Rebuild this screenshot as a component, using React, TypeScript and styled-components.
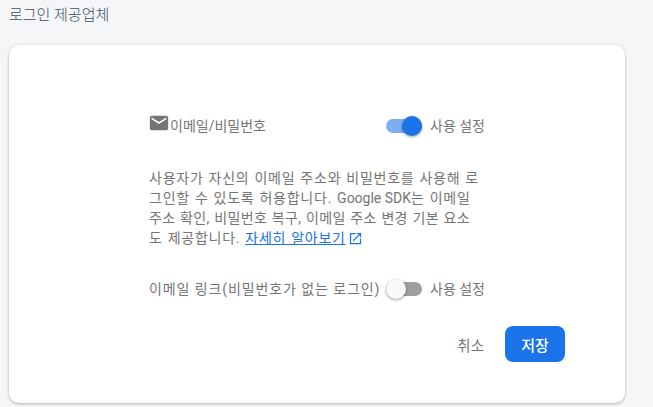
import styled, { createGlobalStyle } from "styled-components";

const GlobalStyle = createGlobalStyle`
  html, body {
    margin: 0;
    padding: 0;
    background: #f5f6f8;
  }
  body {
    font-family: Roboto, "Noto Sans CJK KR", sans-serif;
  }
`;

function Toggle({ on }: { on: boolean }) {
  return (
    <Track $on={on}>
      <Thumb $on={on} />
    </Track>
  );
}

export default function App() {
  return (
    <Page>
      <GlobalStyle />
      <Title>로그인 제공업체</Title>
      <Card>
        <Content>
          <Row>
            <ProviderLabel>
              <MailIcon viewBox="0 0 24 24" fill="#757575">
                <path d="M20 4H4a2 2 0 0 0-2 2v12a2 2 0 0 0 2 2h16a2 2 0 0 0 2-2V6a2 2 0 0 0-2-2zm0 4-8 5-8-5V6l8 5 8-5v2z" />
              </MailIcon>
              이메일/비밀번호
            </ProviderLabel>
            <ToggleGroup>
              <Toggle on />
              <ToggleText>사용 설정</ToggleText>
            </ToggleGroup>
          </Row>
          <Description>
            <DescriptionLine>사용자가 자신의 이메일 주소와 비밀번호를 사용해 로</DescriptionLine>
            <DescriptionLine>
              그인할 수 있도록 허용합니다. <Latin>Google SDK</Latin>는 이메일
            </DescriptionLine>
            <DescriptionLine $tight>주소 확인, 비밀번호 복구, 이메일 주소 변경 기본 요소</DescriptionLine>
            <DescriptionLine>
              도 제공합니다. <LearnMore href="#">자세히 알아보기</LearnMore>
              <ExternalIcon viewBox="0 0 24 24" fill="#1a73e8">
                <path d="M19 19H5V5h7V3H3v18h18v-9h-2v7zM14 3v2h3.59l-9.83 9.83 1.41 1.41L19 6.41V10h2V3h-7z" />
              </ExternalIcon>
            </DescriptionLine>
          </Description>
          <LinkRow>
            <RowLabel>이메일 링크(비밀번호가 없는 로그인)</RowLabel>
            <ToggleGroup>
              <Toggle on={false} />
              <ToggleText>사용 설정</ToggleText>
            </ToggleGroup>
          </LinkRow>
        </Content>
        <Actions>
          <CancelButton>취소</CancelButton>
          <SaveButton>저장</SaveButton>
        </Actions>
      </Card>
    </Page>
  );
}

const Page = styled.div`
  width: 653px;
  height: 407px;
  box-sizing: border-box;
  padding: 0 28px 4px 9px;
  overflow: hidden;
`;

const Title = styled.div`
  height: 45px;
  padding-top: 7px;
  box-sizing: border-box;
  font-size: 15px;
  font-weight: 300;
  line-height: 16px;
  color: #3c5068;
`;

const Card = styled.div`
  height: 358px;
  box-sizing: border-box;
  padding: 68px 60px 0 140px;
  background: #fff;
  border-radius: 10px;
  box-shadow: 0 1px 3px rgba(60, 64, 67, 0.4);
`;

const Content = styled.div`
  width: 336px;
  font-size: 14px;
  line-height: 20px;
  color: #757575;
`;

const Row = styled.div`
  display: flex;
  justify-content: space-between;
  align-items: center;
  height: 26px;
`;

const LinkRow = styled(Row)`
  margin-top: 28px;
`;

const ProviderLabel = styled.div`
  display: flex;
  align-items: center;
`;

const MailIcon = styled.svg`
  width: 22px;
  height: 22px;
  margin: -6px 0 0 -1px;
`;

const RowLabel = styled.div`
  white-space: nowrap;
  letter-spacing: 0.9px;
`;

const ToggleGroup = styled.div`
  display: flex;
  align-items: center;
  gap: 8px;
`;

const ToggleText = styled.span`
  white-space: nowrap;
`;

const Track = styled.div<{ $on: boolean }>`
  position: relative;
  width: 36px;
  height: 14px;
  border-radius: 7px;
  background: ${(p) => (p.$on ? "#7dadf3" : "#9e9e9e")};
`;

const Thumb = styled.div<{ $on: boolean }>`
  position: absolute;
  top: -3px;
  left: ${(p) => (p.$on ? "16px" : "0")};
  width: 20px;
  height: 20px;
  border-radius: 50%;
  background: ${(p) => (p.$on ? "#1a73e8" : "#fafafa")};
  box-shadow: 0 1px 3px rgba(0, 0, 0, 0.4);
`;

const Description = styled.div`
  margin-top: 29px;
`;

const DescriptionLine = styled.div<{ $tight?: boolean }>`
  white-space: nowrap;
  letter-spacing: ${(p) => (p.$tight ? "0.35px" : "0.75px")};
  word-spacing: 0.8px;
`;

const Latin = styled.span`
  font-size: 14px;
  letter-spacing: 0;
  word-spacing: 0;
`;

const LearnMore = styled.a`
  color: #1a73e8;
  text-decoration: underline;
`;

const ExternalIcon = styled.svg`
  width: 15px;
  height: 15px;
  margin-left: 2px;
  vertical-align: -3px;
`;

const Actions = styled.div`
  display: flex;
  justify-content: flex-end;
  align-items: center;
  gap: 21px;
  margin-top: 24px;
`;

const CancelButton = styled.button`
  border: none;
  background: none;
  padding: 0;
  font: inherit;
  font-size: 14.5px;
  color: #757575;
`;

const SaveButton = styled.button`
  width: 60px;
  height: 36px;
  border: none;
  border-radius: 8px;
  background: #1a73e8;
  color: #fff;
  font: inherit;
  font-size: 15px;
  font-weight: 500;
`;
